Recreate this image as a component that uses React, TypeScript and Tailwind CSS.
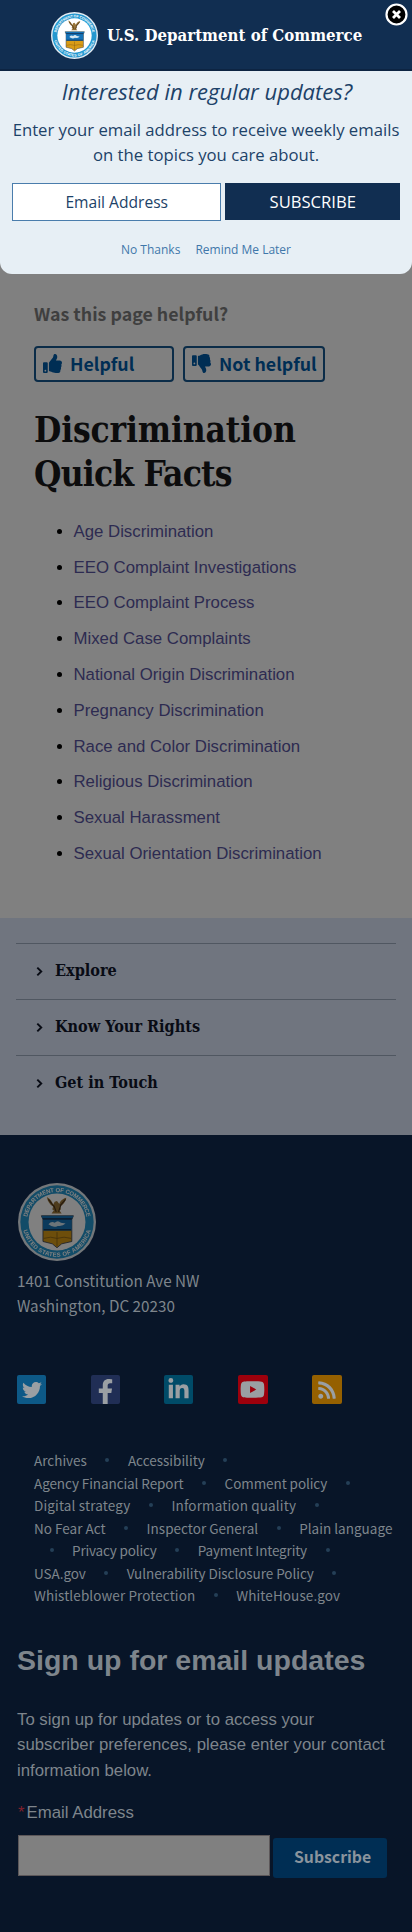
import { FaThumbsUp, FaThumbsDown, FaTwitter, FaFacebookF, FaLinkedinIn, FaRss, FaYoutube } from "react-icons/fa";

const serif = "font-['DejaVu_Serif_Condensed','DejaVu_Serif',serif] font-bold";
const source = "font-['Noto_Sans_CJK_SC','Noto_Sans',sans-serif]";
const arial = "font-['Liberation_Sans',Arial,sans-serif]";

function Seal({ id, className }: { id: string; className: string }) {
  return (
    <svg viewBox="0 0 100 100" className={className} aria-label="Department of Commerce seal">
      <defs>
        <path id={id + "-top"} d="M11.5 50a38.5 38.5 0 0 1 77 0" />
        <path id={id + "-bottom"} d="M5.5 50a44.5 44.5 0 0 0 89 0" />
      </defs>
      <circle cx="50" cy="50" r="50" fill="#e6edf3" />
      <circle cx="50" cy="50" r="47" fill="#2497cf" />
      <circle cx="50" cy="50" r="36.5" fill="#fff" />
      <g fill="#fff" fontSize="7.6" fontWeight="700" fontFamily="Liberation Sans, sans-serif">
        <text textAnchor="middle">
          <textPath href={"#" + id + "-top"} startOffset="50%" textLength="108">DEPARTMENT OF COMMERCE</textPath>
        </text>
        <text textAnchor="middle">
          <textPath href={"#" + id + "-bottom"} startOffset="50%" textLength="118">UNITED STATES OF AMERICA</textPath>
        </text>
      </g>
      <path d="M37 18c1 6 4 10 8 12l-1 4 2 1-3 4h13l-3-4 2-1-1-4c4-2 7-6 8-11-4 1-8 4-9 8l-3-4-3 1-2 4c-1-4-4-8-8-10z" fill="#9b773a" />
      <path d="M39 21l7 9M61 21l-7 8M46 29l3 8M55 28l-3 9" stroke="#4a3318" strokeWidth="1.5" fill="none" />
      <path d="M30 42h41l-2 5v28l-13 3-6 5-6-5-12-3V47z" fill="#d99c16" stroke="#2a3550" strokeWidth="1" />
      <path d="M30 42h41l-2 5v14H32V47z" fill="#1673b8" />
      <path d="M32 46h37M33 60h35" stroke="#153960" strokeWidth="2" />
      <path d="M39 53q4-5 8-2 4-4 8 0l6 1q-4 4-10 3-6 3-12-2z" fill="#d5e7f1" />
      <path d="M50 63v18M33 71q9-3 17 0 9-3 18 0" stroke="#875e13" strokeWidth="1" fill="none" />
    </svg>
  );
}

function Dot() {
  return (
    <span className="flex w-[41px] shrink-0 justify-center">
      <span className="size-[4px] rounded-full bg-[#243f57]" />
    </span>
  );
}

const facts = [
  "Age Discrimination",
  "EEO Complaint Investigations",
  "EEO Complaint Process",
  "Mixed Case Complaints",
  "National Origin Discrimination",
  "Pregnancy Discrimination",
  "Race and Color Discrimination",
  "Religious Discrimination",
  "Sexual Harassment",
  "Sexual Orientation Discrimination",
];

const linkRows = [
  { className: "", items: ["Archives", "•", "Accessibility", "•"] },
  { className: "tracking-[-0.08px]", items: ["Agency Financial Report", "•", "Comment policy", "•"] },
  { className: "tracking-[0.15px]", items: ["Digital strategy", "•", "Information quality", "•"] },
  { className: "tracking-[0.02px]", items: ["No Fear Act", "•", "Inspector General", "•", "Plain language"] },
  { className: "-ml-[3px] tracking-[-0.16px]", items: ["•", "Privacy policy", "•", "Payment Integrity", "•"] },
  { className: "tracking-[-0.05px]", items: ["USA.gov", "•", "Vulnerability Disclosure Policy", "•"] },
  { className: "tracking-[0.1px]", items: ["Whistleblower Protection", "•", "WhiteHouse.gov"] },
];

export default function App() {
  return (
    <div className="h-[1932px] w-[412px] overflow-hidden bg-[#808080]">
      <header className="relative flex h-[71px] border-b-2 border-[#0d2442] bg-[#112e51] pt-3 pl-[51px]">
        <Seal id="header" className="size-[47px] shrink-0" />
        <div className={`${serif} ml-[9px] h-[47px] text-[16.7px] leading-[47px] whitespace-nowrap text-white`}>U.S. Department of Commerce</div>
        <button className="absolute top-[3px] right-[4px]" aria-label="Close">
          <svg viewBox="0 0 23 23" className="size-[23px]">
            <circle cx="11.5" cy="11.5" r="10" fill="#000" stroke="#fff" strokeWidth="2.2" />
            <path d="M8 8l7 7M15 8l-7 7" stroke="#fff" strokeWidth="2.8" />
          </svg>
        </button>
      </header>

      <section className="flex h-[203px] flex-col rounded-b-xl bg-[#e7eff5] px-3 text-center font-['Open_Sans',sans-serif] text-[#1d4268]">
        <h2 className="pt-[5px] pl-[2px] text-[22px] leading-[30px] whitespace-nowrap italic">Interested in regular updates?</h2>
        <p className="mt-[11px] text-[16.7px] leading-[25px] whitespace-nowrap">
          Enter your email address to receive weekly emails
          <br />
          on the topics you care about.
        </p>
        <div className="mt-[16px] flex gap-[4px]">
          <div className="h-[38px] w-[210px] border border-[#4a7dac] bg-white text-[15.6px] leading-[37px]">Email Address</div>
          <button className="h-[37px] w-[175px] bg-[#112e51] text-[16.6px] leading-[38px] text-white">SUBSCRIBE</button>
        </div>
        <div className="mt-[19px] flex justify-center gap-[15px] text-[12px] leading-5 text-[#3f77aa]">
          <a>No Thanks</a>
          <a>Remind Me Later</a>
        </div>
      </section>

      <main className="h-[644px] px-[34px] pt-[25px]">
        <p className={`${source} text-[17.8px] leading-7 font-bold text-[#3f3f3f]`}>Was this page helpful?</p>
        <div className={`${source} mt-[19px] flex gap-[9px] text-[17.8px] font-bold text-[#002e54]`}>
          <button className="flex h-9 w-[140px] items-center gap-2 rounded-[4px] border-2 border-[#0b2c48] pl-[7px]">
            <FaThumbsUp className="size-[19px] -translate-y-px" />
            <span className="leading-8 -translate-y-px">Helpful</span>
          </button>
          <button className="flex h-9 w-[142px] items-center gap-2 rounded-[4px] border-2 border-[#0b2c48] pl-[7px] whitespace-nowrap">
            <FaThumbsDown className="size-[19px] -translate-y-px" />
            <span className="leading-8 -translate-y-px">Not helpful</span>
          </button>
        </div>
        <h1 className={`${serif} mt-[26px] text-[35px] leading-[44px] text-[#0c0c0d]`}>
          <span className="tracking-[-0.15px]">Discrimination</span>
          <br />
          <span className="tracking-[-0.8px]">Quick Facts</span>
        </h1>
        <ul className={`${arial} mt-[17.5px] text-[16.8px] text-[#2d2b51]`}>
          {facts.map((f) => (
            <li key={f} className="flex h-[35.8px] items-center pl-[23px] whitespace-nowrap">
              <span className="mr-[11.5px] size-[5px] rounded-full bg-black" />
              {f}
            </li>
          ))}
        </ul>
      </main>

      <nav className={`${serif} h-[217px] bg-[#70757f] px-4 pt-[25px] text-[16.1px] text-[#080b14]`}>
        {["Explore", "Know Your Rights", "Get in Touch"].map((t) => (
          <div key={t} className="flex h-14 items-center border-t border-[#505761] pl-5">
            <svg viewBox="0 0 8 12" className="h-[11px] w-[7px]">
              <path d="M1.5 1.5L6 6l-4.5 4.5" stroke="currentColor" strokeWidth="2.2" fill="none" />
            </svg>
            <span className="ml-[12px]">{t}</span>
          </div>
        ))}
      </nav>

      <footer className="h-[797px] bg-[#081528] px-[17px] pt-[48px] text-[#7e858c]">
        <Seal id="footer" className="ml-px size-[78px] brightness-50" />
        <address className={`${source} mt-[7px] text-[15.25px] leading-[25px] whitespace-nowrap not-italic`}>
          1401 Constitution Ave NW
          <br />
          Washington, DC 20230
        </address>
        <div className="mt-[57px] flex gap-[44.5px] text-[#9a9fa3]">
          <span className="flex size-[29px] items-center justify-center rounded-xs bg-[#0d5987]"><FaTwitter className="size-5" /></span>
          <span className="flex size-[29px] items-end justify-center rounded-xs bg-[#202e55]"><FaFacebookF className="size-[25px]" /></span>
          <span className="flex size-[29px] items-center justify-center rounded-xs bg-[#004b68]"><FaLinkedinIn className="size-[23px]" /></span>
          <span className="flex h-[29px] w-[30px] items-center justify-center rounded-xs bg-[#9d000c]"><FaYoutube className="size-[25px]" /></span>
          <span className="flex h-[29px] w-[30px] items-center justify-center rounded-xs bg-[#956000]"><FaRss className="size-[20px]" /></span>
        </div>
        <div className={`${source} mt-[45px] pl-[17px] text-[13.5px] leading-[22.5px]`}>
          {linkRows.map((row, r) => (
            <div key={r} className={`flex h-[22.5px] items-center whitespace-nowrap ${row.className}`}>
              {row.items.map((t, i) => (t === "•" ? <Dot key={i} /> : <a key={i}>{t}</a>))}
            </div>
          ))}
        </div>
        <h2 className={`${arial} mt-[33px] text-[28.5px] leading-10 font-bold whitespace-nowrap`}>Sign up for email updates</h2>
        <p className={`${arial} mt-[27px] text-[16.75px] leading-[25.6px] whitespace-nowrap`}>
          To sign up for updates or to access your
          <br />
          subscriber preferences, please enter your contact
          <br />
          information below.
        </p>
        <label className={`${arial} mt-[18px] block text-[16.8px] leading-6`}>
          <span className="ml-px text-[#80202c]">*</span>
          <span className="ml-[2px]">Email Address</span>
        </label>
        <div className="mt-[10px] flex items-start gap-[3px] pl-px">
          <div className="h-[41px] w-[252px] border border-[#5c5759] bg-[#808080]" />
          <button className={`${source} mt-[3px] h-10 w-[114px] rounded-[3px] bg-[#002e54] pl-[21px] pb-[2px] text-left text-[15.8px] leading-9 font-bold text-[#8a949d]`}>Subscribe</button>
        </div>
      </footer>
    </div>
  );
}
